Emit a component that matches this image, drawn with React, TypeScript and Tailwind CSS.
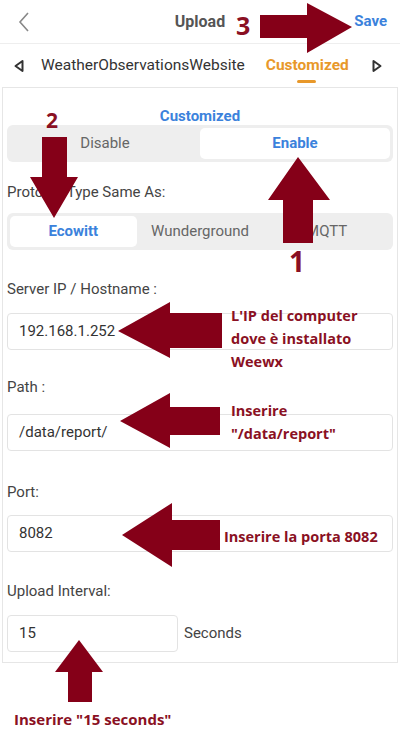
import { useState } from "react";

const uiFont = { fontFamily: "Roboto, 'Noto Sans', sans-serif" };
const noteFont = { fontFamily: "'Open Sans', 'Noto Sans', sans-serif" };

function Segmented({ items, active, onPick }: { items: string[]; active: number; onPick: (i: number) => void }) {
  return (
    <div className="flex h-[37px] rounded-[6px] bg-[#eeeeee] p-[3px]">
      {items.map((item, i) => (
        <button
          key={item}
          onClick={() => onPick(i)}
          className={
            i === active
              ? "flex-1 rounded-[5px] bg-white text-[15px] font-bold text-[#3b82dc]"
              : "flex-1 text-[15px] text-[#666666]"
          }
        >
          {item}
        </button>
      ))}
    </div>
  );
}

function Field({ value, className }: { value: string; className?: string }) {
  return (
    <div className={"flex h-[37px] items-center rounded-[4px] border border-[#e3e3e3] px-[11px] text-[15px] text-[#333333] " + (className ?? "")}>
      {value}
    </div>
  );
}

export default function App() {
  const [enabled, setEnabled] = useState(1);
  const [protocol, setProtocol] = useState(0);

  return (
    <div className="relative h-[755px] w-[400px] overflow-hidden bg-white" style={uiFont}>
      {/* Top bar */}
      <div className="grid h-[44px] grid-cols-[60px_1fr_60px] items-center border-b border-[#eeeeee]">
        <svg width="12" height="20" viewBox="0 0 12 20" className="ml-[18px]">
          <path d="M10 1 L2 10 L10 19" fill="none" stroke="#888888" strokeWidth="1.6" />
        </svg>
        <div className="text-center text-[16px] font-bold text-[#555555]">Upload</div>
        <div className="pr-[13px] text-right text-[15px] font-bold text-[#3b82dc]">Save</div>
      </div>

      {/* Service tabs */}
      <div className="flex h-[43px] items-center">
        <svg width="12" height="14" viewBox="0 0 12 14" className="ml-[13px]">
          <path d="M9.5 2 L2.5 7 L9.5 12 Z" fill="none" stroke="#333333" strokeWidth="2" strokeLinejoin="round" />
        </svg>
        <div className="ml-[16px] text-[15.5px] text-[#333333]">WeatherObservationsWebsite</div>
        <div className="relative ml-[21px] text-[15.5px] font-bold text-[#e8982a]">
          Customized
          <span className="absolute left-[31px] top-[26px] h-[3px] w-[19px] rounded-full bg-[#e8982a]" />
        </div>
        <svg width="12" height="14" viewBox="0 0 12 14" className="ml-[22px]">
          <path d="M2.5 2 L9.5 7 L2.5 12 Z" fill="none" stroke="#333333" strokeWidth="2" strokeLinejoin="round" />
        </svg>
      </div>

      {/* Settings card */}
      <div className="mx-[2px] border border-[#e6e6e6] px-[4px] pb-[10px]">
        <div className="mt-[19px] h-[18px] text-center text-[15px] font-bold leading-[18px] text-[#3b82dc]">Customized</div>
        <Segmented items={["Disable", "Enable"]} active={enabled} onPick={setEnabled} />

        <div className="mt-[20px] h-[20px] text-[15px] leading-[20px] text-[#444444]">Protocol Type Same As:</div>
        <div className="mt-[11px]">
          <Segmented items={["Ecowitt", "Wunderground", "MQTT"]} active={protocol} onPick={setProtocol} />
        </div>

        <div className="mt-[29px] h-[20px] text-[15px] leading-[20px] text-[#444444]">Server IP / Hostname :</div>
        <Field value="192.168.1.252" className="mt-[14px]" />

        <div className="mt-[27px] h-[20px] text-[15px] leading-[20px] text-[#444444]">Path :</div>
        <Field value="/data/report/" className="mt-[17px]" />

        <div className="mt-[31px] h-[20px] text-[15px] leading-[20px] text-[#444444]">Port:</div>
        <Field value="8082" className="mt-[13px]" />

        <div className="mt-[29px] h-[20px] text-[15px] leading-[20px] text-[#444444]">Upload Interval:</div>
        <div className="mt-[14px] flex items-center">
          <Field value="15" className="w-[171px]" />
          <span className="ml-[6px] text-[15px] text-[#444444]">Seconds</span>
        </div>
      </div>

      {/* Annotation arrows */}
      <svg className="pointer-events-none absolute left-0 top-0" width="400" height="755" viewBox="0 0 400 755">
        <g fill="#850018">
          <polygon points="260,15 307,15 307,3 352,27 307,53 307,38 260,38" />
          <polygon points="42,137 67,137 67,177 78,177 54,218 30,177 42,177" />
          <polygon points="298,157 330,200 313,200 313,243 283,243 283,200 268,200" />
          <polygon points="118,331 170,302 170,313 222,313 222,348 170,348 170,358" />
          <polygon points="120,421 170,393 170,407 220,407 220,435 170,435 170,448" />
          <polygon points="122,535 172,503 172,520 220,520 220,550 172,550 172,567" />
          <polygon points="79,640 103,672 92,672 92,702 68,702 68,672 55,672" />
        </g>
      </svg>

      {/* Annotation labels */}
      <div className="pointer-events-none absolute inset-0 font-bold text-[#8a1023]" style={noteFont}>
        <div className="absolute left-[236px] top-[6px] text-[25px] leading-[38px]">3</div>
        <div className="absolute left-[46px] top-[104px] text-[21px] leading-[32px]">2</div>
        <div className="absolute left-[289px] top-[240px] text-[28px] leading-[42px]">1</div>
        <div className="absolute left-[231px] top-[304px] text-[14.5px] leading-[23px]">
          L'IP del computer
          <br />
          dove è installato
          <br />
          Weewx
        </div>
        <div className="absolute left-[231px] top-[399px] text-[14.5px] leading-[23px]">
          Inserire
          <br />
          "/data/report"
        </div>
        <div className="absolute left-[224px] top-[525px] text-[14.5px] leading-[23px]">Inserire la porta 8082</div>
        <div className="absolute left-[14px] top-[707px] text-[15px] leading-[25px]">Inserire "15 seconds"</div>
      </div>
    </div>
  );
}
